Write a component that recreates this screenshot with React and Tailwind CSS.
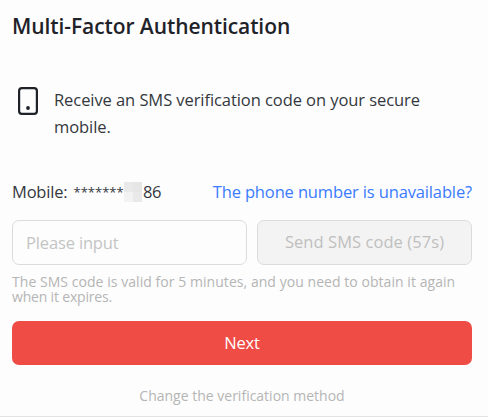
import React, { useState } from "react";

function PhoneIcon() {
  return (
    <svg width="20" height="28" viewBox="0 0 20 28" fill="none" className="mt-px shrink-0">
      <rect x="1.1" y="1.1" width="17.8" height="25.8" rx="2.8" stroke="#1f2329" strokeWidth="2.2" />
      <circle cx="10" cy="21" r="1.9" fill="#1f2329" />
    </svg>
  );
}

export default function App() {
  const [code, setCode] = useState("");

  return (
    <div className="flex h-[417px] w-[488px] flex-col overflow-hidden border-b border-[#e2e3e4] bg-[#fdfdfd] pr-4 pl-3 font-['Open_Sans','Noto_Sans',sans-serif] text-[#34383e]">
      <h1 className="mt-[11px] h-[30px] whitespace-nowrap text-[21px] leading-[30px] font-semibold tracking-[-0.08px] text-[#1f2329]">
        Multi-Factor Authentication
      </h1>

      <div className="mt-[45px] flex gap-4 pl-1.5">
        <PhoneIcon />
        <p className="whitespace-nowrap text-[16.5px] leading-[27px] tracking-[-0.07px]">
          Receive an SMS verification code on your secure
          <br />
          mobile.
        </p>
      </div>

      <div className="mt-[38px] flex h-7 items-center justify-between whitespace-nowrap text-[16.5px] leading-7">
        <div className="flex items-center">
          <span className="w-[61.5px] tracking-[-0.2px]">Mobile:</span>
          <span className="w-[50.5px] text-[13px]">*******</span>
          <span className="mr-px grid h-5 w-[18px] grid-cols-2">
            <span className="bg-[#e9e9e9]" />
            <span className="bg-[#e6e6e6]" />
            <span className="bg-[#f3f3f3]" />
            <span className="bg-[#e9e9e9]" />
          </span>
          <span className="tracking-[-0.4px]">86</span>
        </div>
        <a href="#" className="tracking-[-0.14px] text-[#3a7bff]">
          The phone number is unavailable?
        </a>
      </div>

      <div className="mt-[14px] flex gap-[10px]">
        <input
          type="text"
          value={code}
          onChange={(e) => setCode(e.target.value)}
          placeholder="Please input"
          className="h-[45px] w-[235px] rounded-[7px] border border-[#dcdcdc] px-[13px] text-[16.5px] tracking-[-0.15px] placeholder:text-[#c4c4c4]"
        />
        <button
          disabled
          className="h-[45px] w-[215px] rounded-[7px] border border-[#dcdcdc] bg-[#f3f3f3] text-[16.5px] tracking-[0.06px] text-[#bfbfbf]"
        >
          Send SMS code (57s)
        </button>
      </div>

      <p className="mt-[9px] whitespace-nowrap text-[14px] leading-[15px] tracking-[0.05px] text-[#b5b5b5]">
        The SMS code is valid for 5 minutes, and you need to obtain it again
        <br />
        <span className="tracking-[-0.18px]">when it expires.</span>
      </p>

      <button className="mt-[17px] h-11 w-full shrink-0 rounded-[7px] bg-[#ef4c46] text-[16.5px] tracking-[-0.2px] text-white">
        Next
      </button>

      <a href="#" className="mt-[21px] text-center text-[14px] leading-5 text-[#b5b5b5]">
        Change the verification method
      </a>
    </div>
  );
}
